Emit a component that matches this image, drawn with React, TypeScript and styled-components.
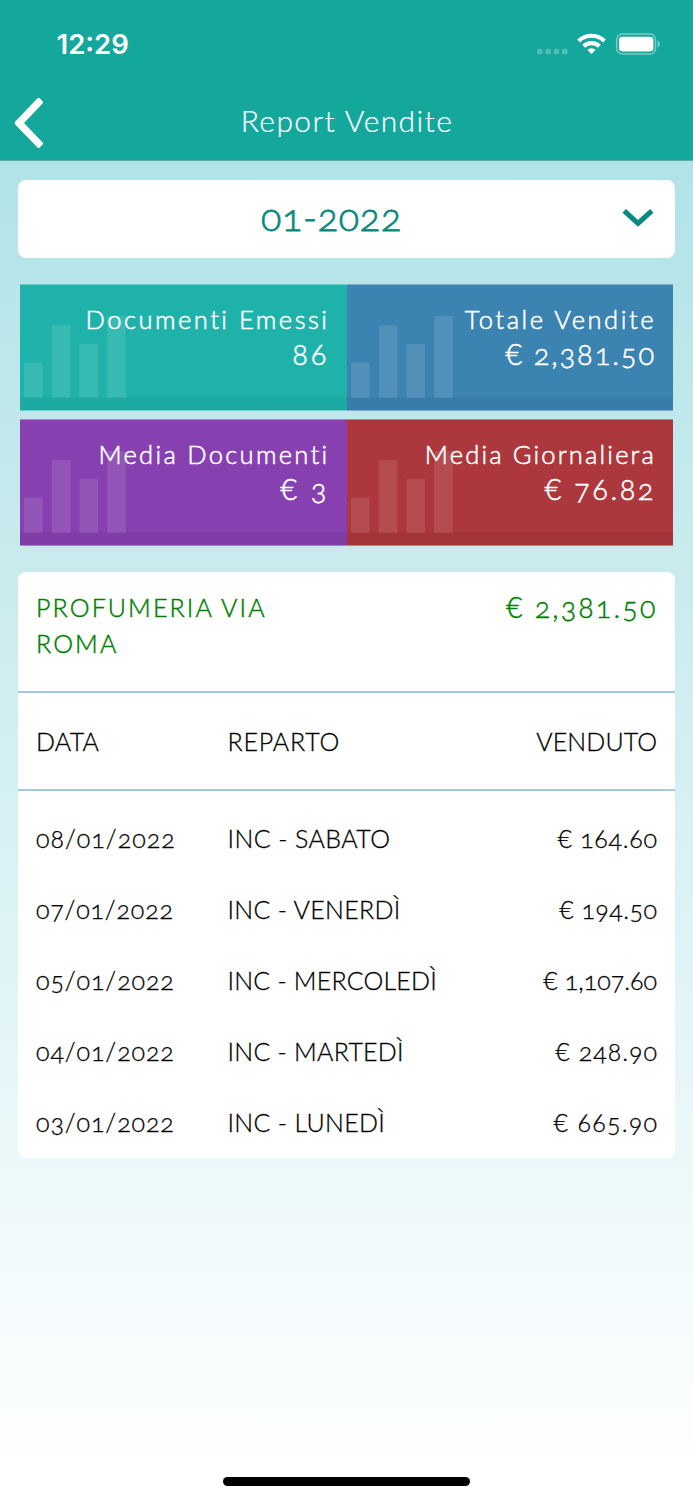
import React from 'react';
import styled, { createGlobalStyle } from 'styled-components';

const GlobalStyle = createGlobalStyle`
  * { box-sizing: border-box; }
  body {
    margin: 0;
    font-family: Lato, 'Open Sans', sans-serif;
    font-weight: 300;
    font-variant-numeric: oldstyle-nums;
    -webkit-font-smoothing: antialiased;
  }
`;

const Screen = styled.div`
  display: flex;
  flex-direction: column;
  width: 693px;
  height: 1500px;
  overflow: hidden;
  background: linear-gradient(180deg, #b0e3e8 161px, #c9ebee 560px, #daf2f5 880px, #eef9fa 1200px, #ffffff 1480px);
`;

const Header = styled.header`
  flex: none;
  height: 161px;
  background: #14a89d;
  border-bottom: 1px solid #62aca6;
  color: #fff;
`;

const StatusBar = styled.div`
  display: flex;
  align-items: center;
  justify-content: space-between;
  height: 88px;
  padding: 0 32px 0 56.5px;
`;

const Clock = styled.span`
  font-family: Inter, sans-serif;
  font-weight: 600;
  font-size: 27.5px;
  font-variant-numeric: normal;
`;

const NavBar = styled.div`
  display: grid;
  grid-template-columns: 60px 1fr 60px;
  align-items: center;
  height: 70px;
`;

const BackButton = styled.button`
  display: flex;
  padding: 0;
  border: 0;
  background: none;
`;

const Title = styled.h1`
  margin: 0;
  padding: 0 0 6px 1px;
  text-align: center;
  font-weight: 300;
  font-size: 30px;
  letter-spacing: 1.4px;
  line-height: 58px;
  -webkit-text-stroke: 0.2px currentColor;
`;

const Content = styled.main`
  display: flex;
  flex-direction: column;
  padding: 19px 18px 0;
`;

const MonthSelect = styled.div`
  display: grid;
  grid-template-columns: 1fr 32px;
  height: 78px;
  padding-right: 21px;
  border-radius: 8px;
  background: #fff;
  color: #07897f;
  text-align: center;

  svg { margin-top: 28px; }
`;

const Month = styled.span`
  padding-left: 23px;
  font-size: 37.5px;
  letter-spacing: 0.8px;
  line-height: 74px;
  -webkit-text-stroke: 0.8px currentColor;
`;

const TileGrid = styled.section`
  display: grid;
  grid-template-columns: 1fr 1fr;
  row-gap: 8px;
  margin: 26px 2px 0;
`;

const Tile = styled.article<{ $color: string }>`
  position: relative;
  height: 127px;
  padding: 18px 17px 0 0;
  background: ${(p) => p.$color};
  box-shadow: inset 0 1px rgba(255, 255, 255, 0.35), inset 0 -1px rgba(255, 255, 255, 0.35);
  color: #fff;
  text-align: right;
  -webkit-text-stroke: 0.55px currentColor;
`;

const TileBars = styled.svg`
  position: absolute;
  left: 0;
  bottom: 13px;
`;

const TileFoot = styled.div`
  position: absolute;
  left: 0;
  right: 0;
  bottom: 1px;
  height: 13px;
  background: rgba(0, 0, 0, 0.045);
`;

const TileLabel = styled.div<{ $track: number }>`
  position: relative;
  font-size: 25.5px;
  line-height: 35px;
  letter-spacing: ${(p) => p.$track}px;
  white-space: nowrap;
`;

const TileValue = styled.div<{ $track: number }>`
  position: relative;
  font-size: 29px;
  line-height: 34px;
  letter-spacing: ${(p) => p.$track}px;
`;

const Card = styled.section`
  height: 586px;
  margin-top: 26px;
  border-radius: 8px;
  background: #fff;
  color: #000;
  -webkit-text-stroke: 0.3px currentColor;
`;

const CardHeader = styled.div`
  display: flex;
  justify-content: space-between;
  height: 121px;
  padding: 18px 17.5px 0 18px;
  border-bottom: 2px solid #9fc7e1;
  color: #008000;
  -webkit-text-stroke: 0.45px currentColor;
`;

const ShopName = styled.div`
  width: 270px;
  font-size: 25px;
  line-height: 35.6px;
  letter-spacing: 2.1px;
`;

const ShopTotal = styled.div`
  font-size: 28.5px;
  line-height: 34px;
  letter-spacing: 2.2px;
`;

const Row = styled.div`
  display: grid;
  grid-template-columns: 191.5px 1fr auto;
  align-items: center;
  height: 71.2px;
  padding: 0 18px;
  font-size: 25px;
  line-height: 30px;
`;

const HeadRow = styled(Row)`
  height: 98px;
  border-bottom: 2px solid #a3c9e2;
`;

const Rows = styled.div`
  padding-top: 11px;
`;

const Cell = styled.span<{ $track: number }>`
  letter-spacing: ${(p) => p.$track}px;
  white-space: nowrap;
`;

const AmountCell = styled(Cell)`
  margin-right: ${(p) => -p.$track}px;
`;

const Currency = styled.span`
  font-variant-numeric: normal;
`;

const HomeBar = styled.div`
  width: 247px;
  height: 9px;
  margin: auto auto 14px 223px;
  border-radius: 5px;
  background: #000;
`;

const Euro = ({ value }: { value: string }) => (
  <>
    <Currency>€</Currency> {value}
  </>
);

const StatusIcons = () => (
  <svg width="125" height="24" viewBox="536 32 125 24" fill="#fff">
    {[537, 545.4, 553.7, 562].map((x) => (
      <rect key={x} x={x} y="48.8" width="5.6" height="5.4" rx="1.8" opacity=".25" />
    ))}
    <path d="M577.2 39.5a20.6 20.6 0 0 1 28.6 0l-2.8 3a16.6 16.6 0 0 0-23 0z" />
    <path d="M582.2 44.7a13.4 13.4 0 0 1 18.6 0l-3 3.1a9.2 9.2 0 0 0-12.6 0z" />
    <path d="M587.4 49.8a6 6 0 0 1 8.2 0l-4.1 4.2z" />
    <rect x="616.7" y="34.1" width="38.8" height="20" rx="5.5" fill="none" stroke="#fff" strokeWidth="1.5" opacity=".42" />
    <rect x="619" y="36.8" width="34.4" height="14.6" rx="3.3" />
    <path d="M657.6 40.6c3 1 3 6 0 7z" opacity=".45" />
  </svg>
);

const tiles = [
  { label: 'Documenti Emessi', value: '86', color: '#1fb2ab', track: 2.5, valueTrack: 3 },
  { label: 'Totale Vendite', value: '2,381.50', euro: true, color: '#3b83b1', track: 2.55, valueTrack: 1.9 },
  { label: 'Media Documenti', value: '3', euro: true, color: '#8640b0', track: 2.3, valueTrack: 3 },
  { label: 'Media Giornaliera', value: '76.82', euro: true, color: '#ac373d', track: 2.15, valueTrack: 2.5 },
];

const sales = [
  { date: '08/01/2022', dept: 'INC - SABATO', amount: '164.60', tracks: [1, 0.4, 0.7] },
  { date: '07/01/2022', dept: 'INC - VENERDÌ', amount: '194.50', tracks: [0.8, 0.3, 0.45] },
  { date: '05/01/2022', dept: 'INC - MERCOLEDÌ', amount: '1,107.60', tracks: [0.9, 0.2, 0] },
  { date: '04/01/2022', dept: 'INC - MARTEDÌ', amount: '248.90', tracks: [0.9, 0.25, 1] },
  { date: '03/01/2022', dept: 'INC - LUNEDÌ', amount: '665.90', tracks: [0.9, 0.3, 1.25] },
];

export default function App() {
  return (
    <>
      <GlobalStyle />
      <Screen>
        <Header>
          <StatusBar>
            <Clock>12:29</Clock>
            <StatusIcons />
          </StatusBar>
          <NavBar>
            <BackButton aria-label="Indietro">
              <svg width="60" height="54" viewBox="0 96 60 54">
                <path
                  d="M37.5 98.3Q38.6 97.2 39.7 98.3L42.6 101.2Q43.6 102.3 42.6 103.4L24 123L42.6 142.4Q43.6 143.5 42.6 144.6L39.7 147.4Q38.6 148.4 37.5 147.4L15.2 124.4Q14 123 15.2 121.5Z"
                  fill="#fff"
                />
              </svg>
            </BackButton>
            <Title>Report Vendite</Title>
          </NavBar>
        </Header>
        <Content>
          <MonthSelect>
            <Month>01-2022</Month>
            <svg width="32" height="20" viewBox="0 0 32 20">
              <path d="M2.2 2.8L16 15.4L29.8 2.8" fill="none" stroke="currentColor" strokeWidth="5" />
            </svg>
          </MonthSelect>
          <TileGrid>
            {tiles.map((t) => (
              <Tile key={t.label} $color={t.color}>
                <TileBars width="108" height="82" fill="#fff" fillOpacity=".11">
                  <rect x="4" y="46.5" width="18.6" height="35.5" />
                  <rect x="31.8" y="9.2" width="18.6" height="72.8" />
                  <rect x="59.5" y="28" width="18.6" height="54" />
                  <rect x="87.2" y="0" width="18.6" height="82" />
                </TileBars>
                <TileFoot />
                <TileLabel $track={t.track}>{t.label}</TileLabel>
                <TileValue $track={t.valueTrack}>{t.euro ? <Euro value={t.value} /> : t.value}</TileValue>
              </Tile>
            ))}
          </TileGrid>
          <Card>
            <CardHeader>
              <ShopName>PROFUMERIA VIA ROMA</ShopName>
              <ShopTotal>
                <Euro value="2,381.50" />
              </ShopTotal>
            </CardHeader>
            <HeadRow>
              <Cell $track={0.2}>DATA</Cell>
              <Cell $track={0.8}>REPARTO</Cell>
              <AmountCell $track={0.1}>VENDUTO</AmountCell>
            </HeadRow>
            <Rows>
              {sales.map((s) => (
                <Row key={s.date}>
                  <Cell $track={s.tracks[0]}>{s.date}</Cell>
                  <Cell $track={s.tracks[1]}>{s.dept}</Cell>
                  <AmountCell $track={s.tracks[2]}>
                    <Euro value={s.amount} />
                  </AmountCell>
                </Row>
              ))}
            </Rows>
          </Card>
        </Content>
        <HomeBar />
      </Screen>
    </>
  );
}
